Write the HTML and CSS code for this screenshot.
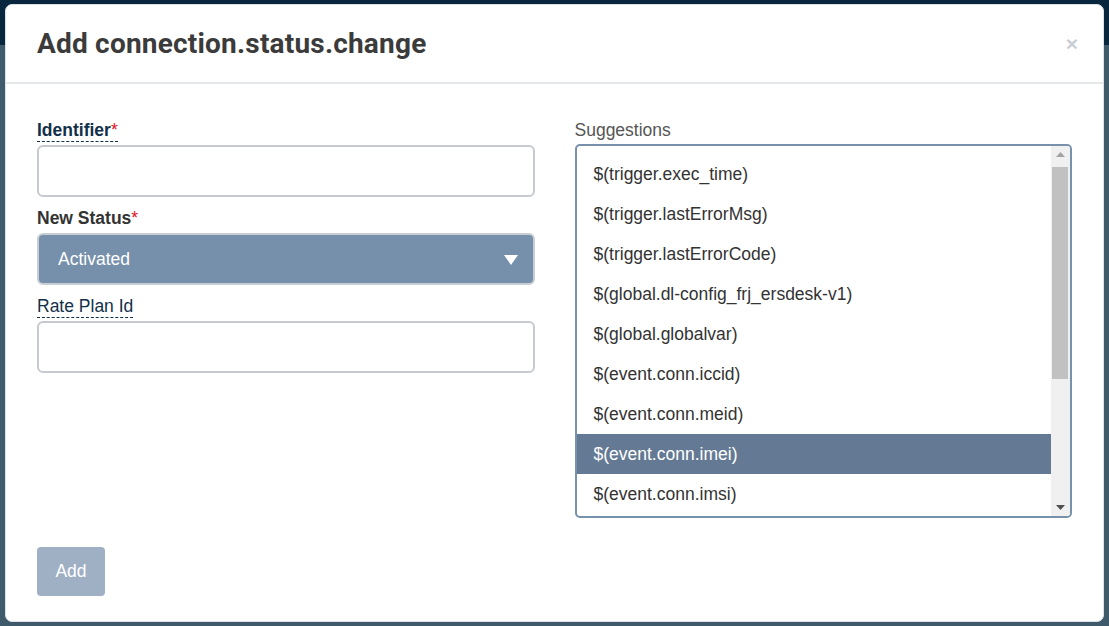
FILE: index.html
```html
<!DOCTYPE html>
<html>
<head>
<meta charset="utf-8">
<link rel="stylesheet" href="styles.css">
</head>
<body>
<div class="modal">
  <div class="modal-header">
    <h1 class="modal-title">Add connection.status.change</h1>
    <span class="close">×</span>
  </div>
  <div class="modal-body">
    <div class="columns">
      <div class="col">
        <div class="group">
          <label class="label label-tip label-bold">Identifier<span class="req">*</span></label>
          <div class="input"></div>
        </div>
        <div class="group">
          <label class="label label-bold label-plain">New Status<span class="req">*</span></label>
          <div class="select">
            <span>Activated</span>
            <svg class="caret" width="14" height="10" viewBox="0 0 14 10"><path d="M0 0 H14 L7 10 Z" fill="#fff"/></svg>
          </div>
        </div>
        <div class="group">
          <label class="label label-tip">Rate Plan Id</label>
          <div class="input"></div>
        </div>
      </div>
      <div class="col">
        <div class="label label-grey">Suggestions</div>
        <div class="listbox">
          <ul class="items">
            <li>$(trigger.exec_time)</li>
            <li>$(trigger.lastErrorMsg)</li>
            <li>$(trigger.lastErrorCode)</li>
            <li>$(global.dl-config_frj_ersdesk-v1)</li>
            <li>$(global.globalvar)</li>
            <li>$(event.conn.iccid)</li>
            <li>$(event.conn.meid)</li>
            <li class="selected">$(event.conn.imei)</li>
            <li>$(event.conn.imsi)</li>
          </ul>
          <div class="scrollbar">
            <svg class="arrow" width="9" height="5" viewBox="0 0 9 5"><path d="M0 5 L4.5 0 L9 5 Z" fill="#a3a3a3"/></svg>
            <div class="track"><div class="thumb"></div></div>
            <svg class="arrow" width="9" height="5" viewBox="0 0 9 5"><path d="M0 0 L9 0 L4.5 5 Z" fill="#505050"/></svg>
          </div>
        </div>
      </div>
    </div>
    <button class="btn">Add</button>
  </div>
</div>
</body>
</html>
```

FILE: styles.css
```css
* { box-sizing: border-box; }
html, body { margin: 0; padding: 0; }
body {
  width: 1109px;
  height: 626px;
  padding: 4px 5px 4px 5px;
  background: linear-gradient(to bottom, #08263d 0, #08263d 45px, #3f5b6b 45px, #3f5b6b 100%);
  font-family: "Liberation Sans", Arial, sans-serif;
  font-size: 17.5px;
  color: #333;
  overflow: hidden;
}
.modal {
  width: 1099px;
  height: 618px;
  background: #fff;
  border-radius: 7px;
  border: 1px solid #dde1e5;
  display: flex;
  flex-direction: column;
}
.modal-header {
  height: 79px;
  border-bottom: 2px solid #e5e8eb;
  display: flex;
  align-items: center;
  justify-content: space-between;
  padding: 0 25px 0 31px;
}
.modal-title {
  margin: 0;
  font-family: Roboto, "DejaVu Sans Condensed", sans-serif;
  font-weight: 700;
  font-size: 28px;
  letter-spacing: 0.2px;
  color: #3b3b3b;
  padding-bottom: 0;
}
.close {
  font-family: "Liberation Sans", Arial, sans-serif;
  font-size: 21px;
  font-weight: 700;
  color: #c9ced4;
  line-height: 1;
}
.modal-body {
  padding: 37px 31px 0 31px;
  flex: 1;
  display: flex;
  flex-direction: column;
}
.columns {
  display: flex;
  gap: 40px;
}
.col {
  width: 498px;
  display: flex;
  flex-direction: column;
}
.group {
  margin-bottom: 12px;
  display: flex;
  flex-direction: column;
  align-items: flex-start;
}
.group:last-child { margin-bottom: 0; }
.input, .select { align-self: stretch; }
.label {
  display: block;
  line-height: 18px;
  padding-bottom: 2px;
  border-bottom: 1px dotted transparent;
  margin-bottom: 3px;
}
.label-tip {
  color: #13304a;
  border-bottom: 1px dashed #13304a;
}
.label-bold { font-weight: 700; }
.label-plain { color: #333; border-bottom-color: transparent; }
.label-grey { color: #555; margin-bottom: 2px; }
.req { color: #e0141e; font-weight: 400; }
.input {
  height: 52px;
  border: 2px solid #c6cacf;
  border-radius: 6px;
  background: #fff;
}
.select {
  height: 52px;
  border: 2px solid #c9ced5;
  border-radius: 6px;
  background: #768fab;
  color: #fff;
  display: flex;
  align-items: center;
  justify-content: space-between;
  padding: 0 15px 0 19px;
}
.caret { display: block; margin-top: 2px; }
.listbox {
  height: 374px;
  border: 2px solid #7891ab;
  border-radius: 5px;
  display: flex;
  overflow: hidden;
}
.items {
  list-style: none;
  margin: 0;
  padding: 8px 0 0 0;
  flex: 1;
}
.items li {
  height: 40px;
  line-height: 40px;
  padding-left: 17px;
  color: #333;
}
.items li.selected {
  background: #647a94;
  color: #fff;
}
.scrollbar {
  width: 19px;
  background: #f0f0f0;
  display: flex;
  flex-direction: column;
  align-items: center;
  padding: 0 2px 0 1px;
}
.arrow { display: block; margin: 6px 0; flex: none; }
.track {
  flex: 1;
  width: 100%;
  display: flex;
  flex-direction: column;
}
.thumb {
  margin-top: 4px;
  height: 212px;
  background: #c1c1c1;
  width: 100%;
}
.btn {
  margin-top: 29px;
  align-self: flex-start;
  width: 68px;
  height: 49px;
  border: none;
  border-radius: 4px;
  background: #9fb0c5;
  color: #fff;
  font-family: "Liberation Sans", Arial, sans-serif;
  font-size: 17.5px;
}
```
